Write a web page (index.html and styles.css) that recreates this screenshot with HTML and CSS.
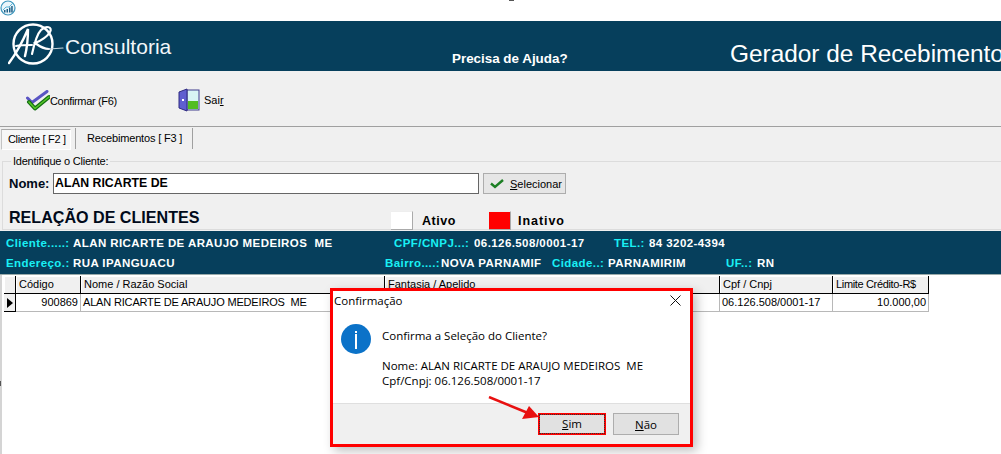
FILE: index.html
```html
<!DOCTYPE html>
<html lang="pt">
<head>
<meta charset="utf-8">
<title>Gerador de Recebimento</title>
<link rel="stylesheet" href="styles.css">
</head>
<body>
<div class="titlebar">
  <svg class="appicon" width="16" height="16" viewBox="0 0 16 16"><circle cx="8" cy="8" r="7" fill="#eaf5fa" stroke="#3d96bd" stroke-width="1.2"/><path d="M3 10l3-3 3 0 4-4" fill="none" stroke="#5cb5d8" stroke-width="1"/><path d="M4 10h1.500v2.500H4zM6.500 9H8v3.500H6.500zM9 7.500h1.500v5H9zM11.200 6h1.500v6.500h-1.500z" fill="#1f5f86"/></svg>
</div>
<header class="banner">
  <div class="brand">
    <svg class="logo" width="60" height="46" viewBox="0 0 60 46" fill="none" stroke="#fff" stroke-linecap="round">
      <circle cx="25" cy="21" r="19.500" stroke-width="2.400"/>
      <path d="M1 40 C7 32 14 20 20 6 C20 16 19 25 17 33" stroke-width="2.400"/>
      <path d="M8 23 C13 22 19 22 24 22" stroke-width="2"/>
      <path d="M24 31 C26 22 29 11 33 7 C38 2 45 4 42 9 C39 14 32 18 27 20 C31 23 36 26 41 26" stroke-width="2.200"/>
      <path d="M41 26 L55 25" stroke="#c8d6de" stroke-width="1.200"/>
    </svg>
    <span class="brandname">Consultoria</span>
  </div>
  <span class="help">Precisa de Ajuda?</span>
  <span class="apptitle">Gerador de Recebimento</span>
</header>
<div class="toolbar">
  <div class="tool tool-confirm">
    <svg width="24" height="22" viewBox="0 0 24 22" fill="none" stroke-linecap="round" stroke-linejoin="round">
      <path d="M1.500 8 L6 12.500 L21 1.500" stroke="#5a55c4" stroke-width="3"/>
      <path d="M3 12 L9 18.500 L23 7" stroke="#136f13" stroke-width="4"/>
      <path d="M3 12 L9 18.500 L23 7" stroke="#58c828" stroke-width="1.600"/>
    </svg>
    <span class="tight-3">Confirmar (F6)</span>
  </div>
  <div class="tool tool-exit">
    <svg width="22" height="24" viewBox="0 0 22 24">
      <rect x="9" y="2" width="12" height="20" fill="#d8f4f4" stroke="#3f3a8c"/>
      <rect x="10" y="13" width="10" height="8" fill="#52bd22"/>
      <path d="M1 4 L9 1 V23 L1 20 Z" fill="#5f5fd0" stroke="#2e2a80"/>
      <rect x="4" y="11" width="2" height="2" fill="#fff"/>
    </svg>
    <span>Sai<u>r</u></span>
  </div>
</div>
<nav class="tabs">
  <div class="tab tab-active tight-3">Cliente [ F2 ]</div>
  <div class="tab tab-other tight-1">Recebimentos [ F3 ]</div>
</nav>
<main class="panel">
  <fieldset class="group">
    <legend class="group-label tight-2">Identifique o Cliente:</legend>
    <div class="search">
      <label class="name-label">Nome:</label>
      <div class="name-input">ALAN RICARTE DE</div>
      <div class="select-btn">
        <svg width="14" height="11" viewBox="0 0 14 11" fill="none"><path d="M1 5.500 L5 9 L13 2" stroke="#1c7f24" stroke-width="2.400"/></svg>
        <span><u>S</u>elecionar</span>
      </div>
    </div>
    <div class="legend-row">
      <h2 class="rel-title">RELAÇÃO DE CLIENTES</h2>
      <span class="swatch swatch-white"></span><span class="status status-ativo">Ativo</span>
      <span class="swatch swatch-red"></span><span class="status status-inativo">Inativo</span>
    </div>
  </fieldset>
  <section class="info">
    <div class="info-line">
      <span class="k w-cliente">Cliente.....:</span><span class="v w-nome">ALAN RICARTE DE ARAUJO MEDEIROS&nbsp; ME</span>
      <span class="k w-cpf">CPF/CNPJ...:</span><span class="v w-cnpj">06.126.508/0001-17</span>
      <span class="k w-tel">TEL.:</span><span class="v">84 3202-4394</span>
    </div>
    <div class="info-line line2">
      <span class="k w-cliente">Endereço.:</span><span class="v w-end">RUA IPANGUACU</span>
      <span class="k w-bairro">Bairro....:</span><span class="v w-bval">NOVA PARNAMIF</span>
      <span class="k w-cidade">Cidade..:</span><span class="v w-cval">PARNAMIRIM</span>
      <span class="k w-uf">UF..:</span><span class="v">RN</span>
    </div>
  </section>
  <div class="grid-area">
    <section class="grid">
      <div class="hd ind"></div>
      <div class="hd">Código</div>
      <div class="hd">Nome / Razão Social</div>
      <div class="hd">Fantasia / Apelido</div>
      <div class="hd">Cpf / Cnpj</div>
      <div class="hd tight-3">Limite Crédito-R$</div>
      <div class="cell ind ind-row"><span class="pointer"></span></div>
      <div class="cell right">900869</div>
      <div class="cell tight-1">ALAN RICARTE DE ARAUJO MEDEIROS&nbsp; ME</div>
      <div class="cell"></div>
      <div class="cell">06.126.508/0001-17</div>
      <div class="cell right">10.000,00</div>
    </section>
  </div>
</main>
<div class="dialog">
  <div class="dlg-title">
    <span>Confirmação</span>
    <svg width="11" height="11" viewBox="0 0 11 11" stroke="#111" stroke-width="1"><path d="M.5.500l10 10M10.500.500l-10 10"/></svg>
  </div>
  <div class="dlg-body">
    <div class="info-icon"><span class="i-bar"></span></div>
    <div class="dlg-text">
      <p class="q">Confirma a Seleção do Cliente?</p>
      <p>Nome: ALAN RICARTE DE ARAUJO MEDEIROS&nbsp; ME</p>
      <p>Cpf/Cnpj: 06.126.508/0001-17</p>
    </div>
  </div>
  <div class="dlg-foot">
    <div class="btn-highlight"><div class="dlg-btn dlg-btn-focus"><span class="dotted"><u>S</u>im</span></div></div>
    <div class="dlg-btn"><span><u>N</u>ão</span></div>
  </div>
</div>
<svg class="arrow" width="60" height="32" viewBox="0 0 60 32"><path d="M1 1 L40 17" stroke="#e81010" stroke-width="2.500"/><path d="M51 21 L34 23 L41 10 Z" fill="#e81010"/></svg>
<span class="mark-top"></span>
<span class="mark-left"></span>
</body>
</html>
```
FILE: styles.css
```css
* { box-sizing: border-box; }
html, body { margin: 0; height: 454px; overflow: hidden; background: #fff; }
body { font-family: "Liberation Sans", Arial, sans-serif; font-size: 11px; color: #000; position: relative; }
p, h2 { margin: 0; }
.tight-1 { letter-spacing: -.17px; }
.tight-2 { letter-spacing: -.23px; }
.tight-3 { letter-spacing: -.34px; }
.titlebar { height: 21px; }
.appicon { display: block; }
.banner { height: 50px; background: #063f5c; color: #fff; display: flex; position: relative; overflow: hidden; }
.brand { display: flex; align-items: flex-start; padding: 2px 0 0 8px; width: 452px; flex: none; }
.logo { flex: none; }
.brandname { font-size: 21px; line-height: 24px; margin: 12px 0 0 -3px; color: #f2f7fa; }
.help { font-size: 13.400px; font-weight: bold; line-height: 16px; margin-top: 30px; flex: none; width: 278px; }
.apptitle { font-size: 24.400px; line-height: 28px; margin-top: 19px; white-space: nowrap; flex: none; }
.toolbar { height: 56px; background: #f0f0f0; border-bottom: 1px solid #a0a0a0; display: flex; align-items: center; }
.tool { display: flex; align-items: center; }
.tool-confirm { margin: 4px 0 0 26px; width: 152px; gap: 0; }
.tool-exit { margin: 2px 0 0 0; gap: 4px; }
.tool span { font-size: 11px; }
.tabs { height: 23px; background: #f0f0f0; display: flex; position: relative; }
.tab { font-size: 11px; line-height: 20px; height: 21px; white-space: nowrap; }
.tab-active { margin: 2px 0 0 1px; width: 70px; padding-left: 6px; line-height: 18px; background: #f7f7f7; border: 1px solid #fff; border-top-color: #a8a8a8; border-left-color: #c4c4c4; }
.tab-other { margin: 1px 0 0 4px; width: 118px; padding-left: 11px; border-left: 1px solid #a0a0a0; border-right: 1px solid #a0a0a0; }
.panel { background: #fff; height: 304px; }
.group { margin: 0; padding: 0; height: 81px; background: #f0f0f0; border: 0; display: block; position: relative; }
.group::before { content: ""; position: absolute; left: 2px; right: 0; top: 11px; bottom: 1px; border: 1px solid #dcdcdc; border-right: 0; pointer-events: none; }
.group-label { position: relative; margin-left: 11px; padding: 0 2px; height: 13px; line-height: 13px; font-size: 11px; z-index: 1; background: #f0f0f0; float: left; margin-top: 5px; }
.search { clear: both; display: flex; align-items: center; padding: 5px 0 0 9px; position: relative; }
.name-label { font-weight: bold; font-size: 13px; width: 44px; color: #000a1a; }
.name-input { width: 426px; height: 21px; background: #fff; border: 1px solid #666; font-weight: bold; font-size: 12.300px; line-height: 19px; padding-left: 1px; }
.select-btn { margin-left: 4px; width: 83px; height: 21px; background: #e6e6e6; border: 1px solid #adadad; display: flex; align-items: center; padding-left: 6px; gap: 6px; font-size: 11px; }
.legend-row { display: flex; align-items: center; padding: 16px 0 0 9px; position: relative; height: 36px; }
.rel-title { font-size: 16.100px; font-weight: bold; width: 382px; flex: none; color: #000a1a; margin-top: -6px; white-space: nowrap; }
.swatch { width: 22px; height: 19px; flex: none; border-right: 1px solid #aaa; border-bottom: 1px solid #aaa; border-top: 1px solid #eee; }
.swatch-white { background: #fff; }
.swatch-red { background: #f00; }
.status { font-weight: bold; font-size: 12.500px; letter-spacing: .55px; margin-top: 2px; margin-left: 7px; }
.status-ativo { width: 67px; margin-left: 9px; }
.status-inativo { letter-spacing: .95px; }
.info { margin: 0; height: 44px; background: #063f5c; padding: 5px 0 0 6px; font-weight: bold; font-size: 11.500px; letter-spacing: .42px; border-bottom: 1px solid #9aa; }
.info-line { display: flex; white-space: nowrap; line-height: 14px; height: 14px; }
.line2 { margin-top: 6px; }
.k { color: #19f0f5; flex: none; }
.v { color: #fff; flex: none; overflow: hidden; }
.w-cliente { width: 67px; }
.w-nome { width: 321px; }
.w-cpf { width: 80px; }
.w-cnpj { width: 140px; }
.w-tel { width: 35px; }
.w-end { width: 312px; }
.w-bairro { width: 56px; }
.w-bval { width: 111px; }
.w-cidade { width: 56px; }
.w-cval { width: 118px; }
.w-uf { width: 31px; }
.grid-area { height: 179px; border-left: 2px solid #d4d4d4; padding: 1px 0 0 2px; }
.grid { display: grid; grid-template-columns: 12px 65px 304px 335px 113px 96px; grid-template-rows: 18px 18px; width: 925px; font-size: 11px; }
.hd { background: #f0f0f0; border-right: 1px solid #000; border-bottom: 1px solid #000; padding-left: 3px; line-height: 17px; white-space: nowrap; box-shadow: inset 1px 1px 0 #fff; }
.hd.ind { padding: 0; }
.cell { border-right: 1px solid #b8b8b8; border-bottom: 1px solid #b8b8b8; padding: 0 2px; line-height: 17px; white-space: nowrap; }
.right { text-align: right; }
.ind-row { background: #f0f0f0; border-right: 1px solid #000; border-bottom: 1px solid #000; padding: 4px 0 0 3px; }
.pointer { display: block; width: 0; height: 0; border-left: 6px solid #000; border-top: 5px solid transparent; border-bottom: 5px solid transparent; }
.dialog { position: absolute; left: 330px; top: 288px; width: 363px; height: 159px; background: #fff; border: 3px solid #f00; box-shadow: 4px 4px 10px rgba(0,0,0,.25); font-family: "Open Sans", "Noto Sans", sans-serif; font-size: 11.500px; display: flex; flex-direction: column; }
.dlg-title { height: 21px; display: flex; justify-content: space-between; align-items: center; padding: 0 9px 3px 1px; flex: none; }
.dlg-body { flex: 1; display: flex; padding: 12px 0 0 8px; }
.info-icon { width: 30px; height: 30px; border-radius: 50%; background: #0b72c8; flex: none; display: flex; justify-content: center; align-items: flex-start; }
.i-bar { display: block; width: 2px; height: 15px; background: #fff; margin-top: 10px; }
.i-bar::before { content: ""; display: block; width: 2px; height: 2px; background: #fff; transform: translateY(-3px); }
.dlg-text { margin-left: 11px; line-height: 15px; }
.q { margin-bottom: 15px; padding-top: 4px; }
.dlg-foot { height: 41px; flex: none; background: #f0f0f0; border-top: 1px solid #dfdfdf; display: flex; justify-content: flex-end; align-items: center; padding: 0 11px 0 0; gap: 7px; }
.btn-highlight { border: 2px solid #f00; width: 68px; height: 22px; display: flex; }
.dlg-btn { width: 66px; height: 22px; background: #e1e1e1; border: 1px solid #adadad; display: flex; align-items: center; justify-content: center; }
.dlg-btn-focus { border: 0; height: 18px; width: 64px; }
.dotted { outline: 1px dotted #333; width: 100%; height: 100%; display: block; text-align: center; line-height: 18px; }
.arrow { position: absolute; left: 488px; top: 396px; }
.mark-top { position: absolute; left: 509px; top: 0; width: 5px; height: 1px; background: #555; }
.mark-left { position: absolute; left: 0; top: 381px; width: 1px; height: 5px; background: #555; }
```
